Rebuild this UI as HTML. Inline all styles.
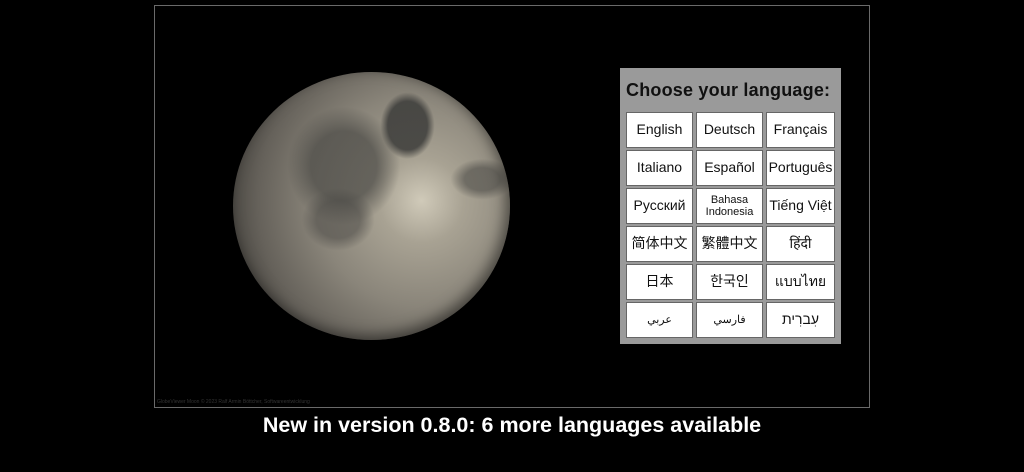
<!DOCTYPE html>
<html><head><meta charset="utf-8"><style>
html,body{margin:0;width:1024px;height:472px;background:#000;overflow:hidden;font-family:"Liberation Sans","Noto Sans CJK SC",sans-serif}
.frame{position:absolute;left:154px;top:5px;width:714px;height:401px;border:1px solid #6a6a6a}
.moon{position:absolute;left:233px;top:72px;width:277px;height:268px;border-radius:50%;
background:
radial-gradient(ellipse at 63% 20%,rgba(60,60,58,.85) 0 8%,transparent 11%),
radial-gradient(ellipse at 40% 35%,rgba(75,74,70,.7) 0 14%,transparent 24%),
radial-gradient(ellipse at 38% 55%,rgba(80,78,74,.6) 0 9%,transparent 15%),
radial-gradient(ellipse at 90% 40%,rgba(75,74,70,.6) 0 5%,transparent 9%),
radial-gradient(circle at 68% 48%,#d0cab9 0%,#a8a293 18%,#8a857a 45%,#65615a 70%,#3a3834 90%,#201e1b 100%);
box-shadow:inset -4px -4px 14px rgba(0,0,0,.5)}
.panel{position:absolute;left:620px;top:68px;width:221px;height:276px;background:#9a9a9a}
.title{position:absolute;left:6px;top:12px;font-weight:bold;font-size:18px;color:#111;white-space:nowrap;letter-spacing:.2px}
.grid{position:absolute;left:6px;top:44px;display:grid;grid-template-columns:67px 67px 69px;grid-auto-rows:36px;gap:2px 3px}
.c{background:#fff;border:1px solid #666;box-sizing:border-box;display:flex;align-items:center;justify-content:center;text-align:center;font-size:14px;color:#111;line-height:1.1;white-space:nowrap}
.s{font-size:11px}
.cap{position:absolute;left:0;width:1024px;top:413px;text-align:center;color:#fff;font-weight:bold;font-size:21.5px}
.cr{position:absolute;left:157px;top:399px;font-size:5px;color:#333}
</style></head><body>
<div class="frame"></div>
<div class="moon"></div>
<div class="cr">GlobeViewer Moon © 2023 Ralf Armin Böttcher, Softwareentwicklung</div>
<div class="panel">
<div class="title">Choose your language:</div>
<div class="grid">
<div class="c">English</div><div class="c">Deutsch</div><div class="c">Français</div>
<div class="c">Italiano</div><div class="c">Español</div><div class="c">Português</div>
<div class="c">Русский</div><div class="c s">Bahasa<br>Indonesia</div><div class="c">Tiếng Việt</div>
<div class="c">简体中文</div><div class="c">繁體中文</div><div class="c">हिंदी</div>
<div class="c">日本</div><div class="c">한국인</div><div class="c">แบบไทย</div>
<div class="c s">عربي</div><div class="c s">فارسي</div><div class="c">עִברִית</div>
</div></div>
<div class="cap">New in version 0.8.0: 6 more languages available</div>
</body></html>
